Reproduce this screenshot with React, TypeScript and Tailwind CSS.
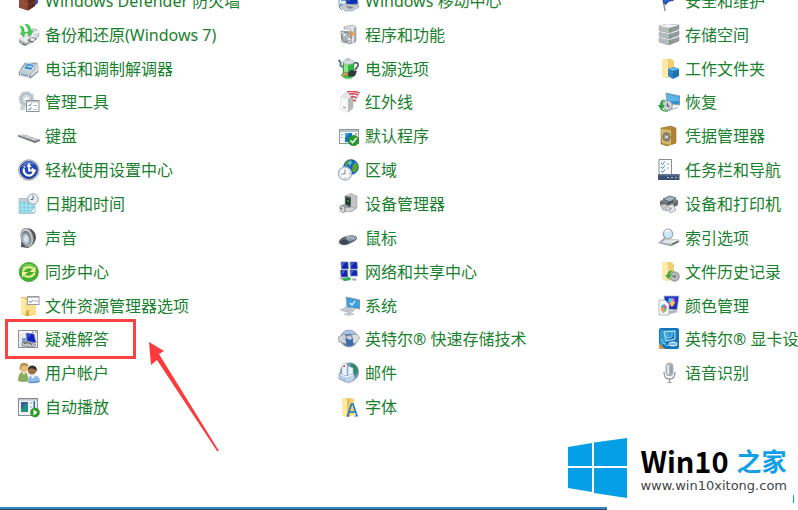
import type { ReactNode } from "react";

const icons: Record<string, ReactNode> = {
  firewall: (
    <>
      <path d="M11 2l9 3v8l-5 4z" fill="#3554b8" />
      <path d="M1 8l8-4 9 3-1 9-7 4.500-9-3z" fill="#7c3b2a" />
      <path d="M1 8l9 3v9.500l-9-3z" fill="#8f4a37" />
      <path d="M10 11l7-3v8l-7 4.500z" fill="#5e2a20" />
      <path d="M1 12l9 3M5 9.500v4M6 14v4M10 15l7-3" stroke="#a0604a" strokeWidth=".5" fill="none" />
    </>
  ),
  backup: (
    <>
      <path d="M1 16l9-4 6 3v2l-8 5-7-3z" fill="#a8adb2" />
      <path d="M1 15.500l9-4.500 6 3-8 5z" fill="#eceff1" stroke="#a6aaae" strokeWidth=".5" />
      <path d="M4 20l4 1" stroke="#555" strokeWidth="1" />
      <ellipse cx="15.500" cy="10" rx="5.500" ry="5" fill="#d7dadd" stroke="#8b9095" strokeWidth=".7" />
      <path d="M15 9.500l5-3 .8 2.500zM15 9.500l-2 4.500 4 .5z" fill="#fafafa" />
      <path d="M9 16l6-3 4 2-5 4z" fill="#74797e" />
      <ellipse cx="14.500" cy="15.500" rx="2.500" ry="1.500" fill="#e9e9e9" />
      <path d="M2 2q5 0 4 6h2l-2.500 5L2 9h2Q4 5 2 2zM7 0q6 0 5.500 7H15l-3 5-4-4h2.500Q10 3 7 0z" fill="#43d04a" stroke="#1c9f2b" strokeWidth=".4" />
    </>
  ),
  phone: (
    <>
      <path d="M1 14L7 5l12 0 1 9-7 6-12-3z" fill="#8b9aa5" stroke="#6f7d87" strokeWidth=".5" />
      <path d="M1 14l11 3 7-8-11-3z" fill="#c3cdd4" />
      <path d="M8.500 5l8 1.500-3 6-8-1.500z" fill="#4293d0" stroke="#eef5f9" strokeWidth=".8" />
      <path d="M9 8l5 1" stroke="#d7f0ff" strokeWidth="1" />
      <path d="M17 5l3 2v6l-7 6-1-2 5-6z" fill="#d8dfe4" stroke="#8c979e" strokeWidth=".5" />
      <path d="M2 14.500l9 2.500v3l-9-3z" fill="#dfe6ea" />
      <path d="M3 16l7 2" stroke="#4c7ba1" strokeWidth="1" />
    </>
  ),
  admin: (
    <>
      <circle cx="8.500" cy="8" r="5.500" fill="none" stroke="#b5c1c8" strokeWidth="3.500" />
      <circle cx="8.500" cy="8" r="7" fill="none" stroke="#c0cbd1" strokeWidth="2" strokeDasharray="2.800 2.700" />
      <circle cx="8.500" cy="8" r="3" fill="#f1f6f8" stroke="#91a2ac" strokeWidth=".5" />
      <path d="M3 13l-1 6h5v-5z" fill="#c7d3da" />
      <rect x="8.500" y="9.500" width="12.500" height="11" fill="#fff" stroke="#8b9195" />
      <path d="M9 10h12v1.500H9z" fill="#bcc4c9" />
      <path d="M10.500 14l1 1 2-2.500M10.500 18l1 1 2-2.500" stroke="#267dce" fill="none" />
      <path d="M15.500 14.500H19M15.500 18.500H19" stroke="#b4bbbf" />
    </>
  ),
  keyboard: (
    <>
      <path d="M0 10l6-.5 16 5-5 2z" fill="#babdc0" />
      <path d="M0 10v1.500l17 6.500 5-2v-1.500l-5 1.500z" fill="#6d7276" />
      <path d="M3 10.500l14 4.500M6 10.300l12 3.700" stroke="#dddfe1" strokeWidth=".7" />
      <path d="M5 12l5-2M10 14l5-2" stroke="#9ba0a4" strokeWidth=".5" />
    </>
  ),
  ease: (
    <>
      <circle cx="10.800" cy="11" r="10.300" fill="#bfc5d1" stroke="#8990a5" strokeWidth=".7" />
      <circle cx="10.800" cy="11" r="8.500" fill="#2146b8" stroke="#142f8b" />
      <path d="M4 8a7 7 0 0113-2q-6-2-13 2z" fill="#5274d4" />
      <path d="M6 9.500a5 5 0 0010 3.500" fill="none" stroke="#fff" strokeWidth="2.200" />
      <path d="M11 5v6.500h6" fill="none" stroke="#fff" strokeWidth="1.800" />
      <path d="M13.500 8.500l5 3-4 3.500zM8.500 8L11 3.500 13.500 8z" fill="#fff" />
      <circle cx="6.500" cy="8" r="1" fill="#cbd7fa" />
    </>
  ),
  date: (
    <>
      <path d="M1 5.500h16v14l-2 1H1z" fill="#d7edf3" stroke="#8cb1bd" strokeWidth=".7" />
      <path d="M1.500 9h15v10.500h-15z" fill="#7fd0e2" />
      <path d="M1 6h16v3H1z" fill="#bdcbd2" />
      <path d="M4.500 9v10M8.500 9v10M12.500 9v10M2 12.500h14M2 16h14" stroke="#c4eef6" strokeWidth=".7" />
      <path d="M12 20l5-1v-5z" fill="#eefaff" stroke="#91a6ad" strokeWidth=".4" />
      <circle cx="15" cy="6" r="5.300" fill="#e9edf0" stroke="#9aa6ae" />
      <path d="M15 2.500V6.500H12.500" stroke="#536f88" strokeWidth="1" fill="none" />
    </>
  ),
  sound: (
    <>
      <path d="M4 3q3-3 9-1 5 3 5 9-1 7-8 10l-7-1z" fill="#51565a" />
      <ellipse cx="9" cy="10.500" rx="6" ry="9.500" transform="rotate(-14 9 10.500)" fill="#c3c9cd" stroke="#8b9297" strokeWidth=".7" />
      <ellipse cx="8.500" cy="11" rx="4.600" ry="7.500" transform="rotate(-14 8.500 11)" fill="#7c858c" />
      <ellipse cx="8" cy="12" rx="3.500" ry="5.500" transform="rotate(-14 8 12)" fill="#b6c6d1" />
      <ellipse cx="8" cy="12" rx="1.800" ry="3" fill="#dbe5ec" />
    </>
  ),
  sync: (
    <>
      <circle cx="10.800" cy="11" r="9.600" fill="#43b12d" stroke="#2d9129" strokeWidth=".7" />
      <path d="M3 8a8 8 0 0115 0q-7-3-15 0z" fill="#77cb50" />
      <path d="M5 10.500a6 5 0 0110-3" stroke="#f5ee9d" strokeWidth="2" fill="none" />
      <path d="M17.500 5.500v5.500h-6zM4 16.500v-5.500h6z" fill="#f5ee9d" />
      <path d="M16.500 11.500a6 5 0 01-10 3" stroke="#f5ee9d" strokeWidth="2" fill="none" />
    </>
  ),
  explorer: (
    <>
      <path d="M3 2h5l2 2h8v16l-9 1-6-2z" fill="#e9c45d" />
      <path d="M3 3h4l1 16H3z" fill="#ffeaa2" />
      <path d="M7 5h11v15H8z" fill="#fae08d" />
      <path d="M8 21v-5l3-1v6z" fill="#d6aa44" />
      <rect x="9.500" y="1.500" width="11.500" height="8" fill="#fff" stroke="#969ca0" />
      <path d="M10 2h11v1H10z" fill="#bac2c7" />
      <path d="M11 6l1.500 1.500L15 5" stroke="#398ccd" fill="none" />
      <path d="M16 6h4" stroke="#aaa" />
    </>
  ),
  trouble: (
    <>
      <rect x=".5" y="2.500" width="19" height="17" fill="#e8eaec" stroke="#8d9499" />
      <path d="M1 3h18v2H1z" fill="#f8f9f9" />
      <path d="M14 3h1.500v2H14zM17 3h1.500v2H17z" fill="#aaa" />
      <path d="M4 10h4v7H4z" fill="#7ba1c2" />
      <path d="M8 5l8 1 2 9-9-2z" fill="#0b20c3" stroke="#8b92a6" strokeWidth=".7" />
      <path d="M9 6l4 .5-3 4z" fill="#3550d8" />
      <path d="M4 15l6-2 8 4-3 2-11-1z" fill="#c0c4c8" stroke="#626970" strokeWidth=".6" />
      <path d="M6 15.500l4-1 4 2" stroke="#333" strokeWidth=".8" fill="none" />
    </>
  ),
  users: (
    <>
      <path d="M0 19q0-8 4-9l5 1 2 8q-5 2-11 0z" fill="#8bac5d" />
      <circle cx="6" cy="6" r="4.300" fill="#e7bd7c" />
      <path d="M1.500 6Q2-.5 8 1q3 1 2.500 4Q8 3 4 4q-1 2-1.500 5z" fill="#b89550" />
      <path d="M4 10l2 3 2-3" fill="#f7e3b7" />
      <path d="M10 21q0-8 4-8l5 1q3 1 3 6-5 2-12 1z" fill="#8fbbe8" />
      <circle cx="14" cy="8.500" r="4" fill="#a56d46" />
      <path d="M10 8q0-4.500 4.500-4.500t4.500 6q-3-4-7-3z" fill="#34302e" />
      <path d="M12.500 13l2 4 3-3.500" fill="#edf6ff" />
      <path d="M11 20q5 1 10-.5" stroke="#5486bd" fill="none" />
    </>
  ),
  autoplay: (
    <>
      <rect x=".5" y="2.500" width="19" height="17" fill="#f1f2f4" stroke="#878d93" />
      <path d="M1 3h18v1.500H1z" fill="#bdc4ca" />
      <path d="M3 6h7v10H3z" fill="#239083" />
      <path d="M3 6h7L3 13z" fill="#375fa1" />
      <path d="M12 6h2v2h-2zM12 10h2v2h-2z" fill="#bfd0da" />
      <path d="M15.500 5H17v7h-1.500z" fill="#2675a8" />
      <circle cx="17" cy="16.500" r="4.500" fill="#2c9d25" stroke="#157d1c" strokeWidth=".5" />
      <path d="M15.500 13.500l4 3-4 3z" fill="#fff" />
    </>
  ),
  mobility: (
    <>
      <path d="M1 2h9v13H1z" fill="#e9f3fa" stroke="#779fc2" />
      <path d="M3 9h5v2H3z" fill="#4b9dd8" />
      <path d="M8 3l11-1 1 12-12 1z" fill="#0b30b5" stroke="#7a8ea9" />
      <path d="M9 4l9-1-8 9z" fill="#3b6bdc" />
      <path d="M2 16l6-2 12 1 1 2-7 4H7z" fill="#c3cbd3" stroke="#87929b" strokeWidth=".6" />
      <path d="M7 16l9 1-4 2z" fill="#76818a" />
      <path d="M4 13l-3 4 3 3" fill="none" stroke="#5688b3" />
    </>
  ),
  programs: (
    <>
      <path d="M6 3l9-2 3 2v14l-2 2-4-1V5H6z" fill="#dfe2e4" stroke="#898e92" strokeWidth=".6" />
      <path d="M16 4l2-1v14l-2 2z" fill="#a2a9ad" />
      <path d="M3 7l10 1v12l-9-2z" fill="#d9dfe2" stroke="#787f83" strokeWidth=".8" />
      <circle cx="8.500" cy="13" r="4.700" fill="#acb5bb" stroke="#62696f" strokeWidth=".8" />
      <path d="M8.500 13l-4-2 2-2zM9 13l4 2-2 2z" fill="#f2f6f9" />
      <circle cx="8.500" cy="13" r="1.200" fill="#fff" stroke="#555" strokeWidth=".5" />
      <path d="M13 6l1 2 2-1-1 2 2 1-2 1-1 2-1-2-2-1 2-1z" fill="#ef9831" />
    </>
  ),
  power: (
    <>
      <path d="M5 9L2.500 8V4L.5 2" stroke="#5d6d7c" strokeWidth="1.800" fill="none" />
      <path d="M16 5q5-1 4 3l-3 4" stroke="#4f4a68" strokeWidth="1.600" fill="none" />
      <path d="M5 5q0-3 5-3t6 3v13q-2 3-6 3t-5-3z" fill="#32b746" stroke="#257f34" strokeWidth=".5" />
      <path d="M6 6l4 0v12l-4-1z" fill="#8ce58b" />
      <ellipse cx="10.500" cy="4" rx="5.500" ry="2.500" fill="#d8dedf" stroke="#a3acae" strokeWidth=".6" />
      <path d="M8 0h4v3H8z" fill="#bfc6c9" />
      <path d="M8 16l5-4 6 1-2 5-5 1z" fill="#363b3d" />
      <path d="M3 17l5-3 3 2-6 3z" fill="#c3a955" stroke="#665628" strokeWidth=".5" />
      <path d="M6 20q5 2 9-1" stroke="#9fe49c" fill="none" />
    </>
  ),
  infrared: (
    <>
      <path d="M3 6l4-4 8 2v13l-5 4-7-3z" fill="#cbced0" stroke="#a0a5a8" strokeWidth=".5" />
      <path d="M3 6l7 2v13l-7-3z" fill="#f7f7f7" />
      <path d="M10 8l5-4v13l-5 4z" fill="#b5babd" />
      <path d="M3 6l4-4 8 2-5 4z" fill="#e5e8e9" />
      <path d="M5 16l3 1" stroke="#777" strokeWidth=".8" />
      <path d="M9 .8q6-1 12.500 1M11 3q5-1 9 1M13 6q3-1 6 1M15 9l3 1" stroke="#cf4650" strokeWidth="1.500" fill="none" />
      <path d="M16 11l5.500-9" stroke="#e5858b" strokeWidth=".8" />
    </>
  ),
  defaults: (
    <>
      <rect x="1.500" y="4.500" width="19" height="14" fill="#f5f7f9" stroke="#8f989f" />
      <path d="M2 5h18v2H2z" fill="#b8c2c9" />
      <path d="M7 8h7v9H7z" fill="#1675c4" />
      <path d="M7 8h4l-4 5z" fill="#4b9fe8" />
      <path d="M3 9h2v1H3zM3 12h2v1H3zM17 8h2v2h-2z" fill="#a7afb5" />
      <circle cx="15.500" cy="15.500" r="5.300" fill="#249b2b" stroke="#137d20" strokeWidth=".5" />
      <path d="M12.500 15.500l2.200 2.200L18.500 13" fill="none" stroke="#fff" strokeWidth="1.500" />
    </>
  ),
  region: (
    <>
      <circle cx="13" cy="8" r="7.500" fill="#1b67c4" stroke="#174c8b" strokeWidth=".5" />
      <path d="M7 5q3-4 7-4l-2 4-3 1-1 2zM15 6l3-3 2 4-1 4-3 3-2-3z" fill="#58a62c" />
      <path d="M10 3q2-1 4 0l-2 4z" fill="#62c5ee" />
      <circle cx="7" cy="14.500" r="6.700" fill="#dfe5eb" stroke="#9ba8b3" />
      <circle cx="7" cy="14.500" r="5" fill="#f8fafb" />
      <path d="M7 10.500v4.500H3.500M11 14.500h1M7 18.500v1" fill="none" stroke="#697d93" strokeWidth=".9" />
    </>
  ),
  devices: (
    <>
      <path d="M7 3l6-2.500L19 3v12l-6 4-6-3z" fill="#c3c4c6" stroke="#909395" strokeWidth=".5" />
      <path d="M7 3l6 1v12l-6-2z" fill="#595d60" />
      <path d="M8 5l4 1v6l-4-1z" fill="#143d24" />
      <path d="M9 7l2 2" stroke="#51d14c" />
      <path d="M1 13l5-2 4 2v5l-5 2-4-2z" fill="#9b9ea0" />
      <path d="M1 13l5 1v5l-5-1z" fill="#d5d6d8" />
      <path d="M2 14l2 1v2l-2-1z" fill="#767a7d" />
      <path d="M7 15l6-1 5 1-6 4-5-1z" fill="#d2d3d5" stroke="#999" strokeWidth=".5" />
    </>
  ),
  mouse: (
    <>
      <path d="M1 14q2-4 8-5 7-2 10 1 1 3-6 6-7 4-11 1-2-1-1-3z" fill="#5b6773" />
      <path d="M8 9.500q5-2 11 .5-1 3-7 4-5-1-4-4.500z" fill="#93a1ae" />
      <path d="M2 14.500q4-3 7-1l2 3q-7 2-9-2z" fill="#3c4650" />
      <path d="M9 10q5 0 7 2" stroke="#b7c3cc" strokeWidth=".8" fill="none" />
    </>
  ),
  network: (
    <>
      <path d="M3 1l7 0 .5 7-7 0zM12 1l7 0 .5 7-7 0zM2.500 9l7 0 .5 7-7 0zM12 9l7 0 .5 6-7 0z" fill="#1023b0" stroke="#8992aa" strokeWidth=".8" />
      <path d="M4 2h3l-3 4zM13 2h3l-3 4zM4 10h3l-3 4zM13 10h3l-3 4z" fill="#3961d6" />
      <path d="M0 17l7-1 6 1v2l-6 1zM13 18l4-1 2 2-3 1z" fill="#a9b2b9" />
      <path d="M4 18l8-2v3l-6 1z" fill="#25b14a" />
    </>
  ),
  system: (
    <>
      <path d="M8 2l14 3v9L9 12z" fill="#4485ae" stroke="#98a8b3" />
      <path d="M9 3l12 3v7L9 11z" fill="#39a0e2" />
      <path d="M12 8l2 2 3-4" stroke="#fff" fill="none" strokeWidth="1.200" />
      <path d="M2 15l6-3 9 3-5 3zM6 19l6-1 4 1-5 1.500z" fill="#cad3d9" stroke="#9aa4aa" strokeWidth=".5" />
      <path d="M5 15l7 2M7 13.500l7 2" stroke="#9aa8b1" strokeWidth=".5" />
    </>
  ),
  storage: (
    <>
      <circle cx="11" cy="10.500" r="8.300" fill="#3f71b0" stroke="#909aa4" strokeWidth="1.200" />
      <path d="M3 8q3-6 8-6t8 6q-8-4-16 0z" fill="#a9c1de" />
      <path d="M0 9l6-3 4 4-2 6-7-2z" fill="#ccd2d6" stroke="#7e878f" strokeWidth=".6" />
      <path d="M13 7l6-1 3 4-5 6-4-3z" fill="#d7dcdf" stroke="#858e96" strokeWidth=".6" />
      <ellipse cx="11" cy="11" rx="3.500" ry="4" fill="#c2d0dd" stroke="#617386" strokeWidth=".7" />
      <path d="M8 10l4 2v5l-4-2zM12 12l3-2v4l-3 3z" fill="#3c6da8" />
    </>
  ),
  mail: (
    <>
      <circle cx="11.500" cy="10" r="9.200" fill="#6e9dbe" stroke="#557899" strokeWidth=".5" />
      <path d="M13 1q7 2 7 9l-3 4-2-6-3-2z" fill="#2f8b67" />
      <path d="M4 3l5-2v15l-5-1zM10 4l5 2v11l-5-1z" fill="#eef4fa" stroke="#9db2c4" strokeWidth=".5" />
      <path d="M1 11l6 3 9-2 1 5-6 4-10-4z" fill="#bcd3ea" stroke="#7291ad" strokeWidth=".6" />
      <path d="M1 11l6 10M7 14l0 5" stroke="#88a3c4" strokeWidth=".5" />
      <path d="M2 12l5 3 8-2" stroke="#fff" fill="none" />
      <path d="M5 4l2-1v2H5z" fill="#d9433e" />
    </>
  ),
  fonts: (
    <>
      <path d="M4 2h9l3 1v16l-8 2-4-2z" fill="#f2d27b" />
      <path d="M4 2h4l1 2v17l-5-2z" fill="#ffe9a8" />
      <path d="M9 3h3v17l-3 1z" fill="#e9c25c" />
      <path d="M9.500 20l4-12h1.500l4 12M11 16h6.500" fill="none" stroke="#177abe" strokeWidth="1.600" />
      <path d="M8.500 20h3M16.500 20h3.500" stroke="#177abe" />
    </>
  ),
  security: (
    <>
      <path d="M4 2l3 19" stroke="#8b929a" strokeWidth="1.500" />
      <path d="M4 2q5-2 8 1t7 0q0 5-4 8-5 0-7 4l-3-2z" fill="#2449b0" />
      <path d="M5 3q5-1 7 2l-1 6q-4 0-5 3z" fill="#3264cc" />
      <path d="M12 6q3 1 5 0" stroke="#7da2ec" fill="none" />
    </>
  ),
  spaces: (
    <>
      {[14, 8, 2].map((y) => (
        <g key={y}>
          <path d={`M1 ${y}l8-2 12 1v4l-10 4L1 ${y + 4}z`} fill="#92999d" stroke="#7e8488" strokeWidth=".5" />
          <path d={`M1 ${y}l10 2v5L1 ${y + 4}z`} fill="#b5babd" />
          <path d={`M1 ${y}l8-2 12 1-10 3z`} fill="#f0f2f3" />
          <path d={`M12 ${y + 3}v3`} stroke="#6a9f45" strokeWidth="1.200" />
        </g>
      ))}
    </>
  ),
  workfolders: (
    <>
      <path d="M4 1h9l3 2v14l-8 3-4-2z" fill="#f2ce71" />
      <path d="M4 1h5l1 3v16l-6-2z" fill="#ffe9aa" />
      <path d="M10 11l6-2 5 2v7l-6 3-5-3z" fill="#1c75b1" />
      <path d="M10 11l6-2 5 2-6 2z" fill="#63bae7" />
      <path d="M10 12l5 2v6l-5-2z" fill="#318fc7" />
      <path d="M10 15l5 2 6-2" stroke="#0f5e97" strokeWidth=".5" fill="none" />
    </>
  ),
  recovery: (
    <>
      <path d="M8 2l14 3v9L9 13z" fill="#348fcb" stroke="#98a8b2" />
      <path d="M9 3l12 3v4L9 10z" fill="#59b4ea" />
      <path d="M8 19l11-3 1 1-9 3z" fill="#b1bdc6" />
      <circle cx="9.500" cy="14.500" r="5" fill="#b5bcc0" stroke="#8a949a" strokeWidth=".7" />
      <circle cx="9.500" cy="14.500" r="3" fill="none" stroke="#edf0f2" />
      <path d="M9.500 12v3l2 1" stroke="#475764" fill="none" />
      <path d="M8 9q-4 1-3.500 5H7l-4 5-3-5h2Q2 8 8 9z" fill="#24a33a" />
      <path d="M3 18q3 3 7 2" stroke="#24a33a" strokeWidth="1.200" fill="none" />
    </>
  ),
  credentials: (
    <>
      <path d="M3 3l10-2 5 2v15l-9 3-6-2z" fill="#b28737" stroke="#957a3b" strokeWidth=".6" />
      <path d="M3 4l10 1v15l-9-2z" fill="#d6b96a" />
      <path d="M13 5l5-2v15l-5 2z" fill="#ad8131" />
      <path d="M5 6l7 1v11l-7-2z" fill="#aa9d65" stroke="#e8d295" strokeWidth=".5" />
      <circle cx="8.500" cy="12" r="3.700" fill="#b5b6a3" stroke="#5a5742" strokeWidth=".8" />
      <path d="M5 12h7M8.500 8v8M6 9l5 6M11 9l-5 6" stroke="#555546" strokeWidth=".6" />
      <circle cx="8.500" cy="12" r="1.200" fill="#efeee0" />
    </>
  ),
  taskbar: (
    <>
      <path d="M1 .5h12.500V16H1z" fill="#fafbfc" stroke="#858e99" />
      <path d="M3 4l1.500 1.500L7 2.500M3 8l1.500 1.500L7 6.500M3 12l1.500 1.500L7 10.500" stroke="#347fc0" fill="none" />
      <path d="M9 5h2M9 9h2" stroke="#929ba5" />
      <path d="M0 15h21.500v6H0z" fill="#3d5275" />
      <path d="M0 15h21.500v1.500H0z" fill="#647695" />
      <path d="M9 18h2v1H9zM13 18h2v1h-2zM17 18h2v1h-2z" fill="#aebdd4" />
    </>
  ),
  printers: (
    <>
      <path d="M2 8l9-4 9 3v4l-7 4-11-3z" fill="#7b8083" />
      <path d="M5 6l7-3 6 2-6 4z" fill="#a3b7c5" stroke="#535c62" strokeWidth=".8" />
      <path d="M2 8l10 3 8-3v4l-7 4-11-4z" fill="#666b6f" />
      <path d="M2 12l5-1 4 2v5l-6-1z" fill="#c3c8cc" stroke="#858c91" strokeWidth=".6" />
      <path d="M9 13l6-2 3 6-5 3-5-4z" fill="#e0e2e4" stroke="#868b8f" strokeWidth=".6" />
      <path d="M10 14l4 1-2 3z" fill="#9ca3a9" />
      <path d="M9 11l6-3" stroke="#2c3236" />
    </>
  ),
  indexing: (
    <>
      <path d="M1 15l6-3 14 1v2l-8 4-12-3z" fill="#a0a8ad" stroke="#8f969b" strokeWidth=".5" />
      <path d="M1 15l6-3 14 1-8 4z" fill="#e1e5e7" />
      <path d="M14 17.500l6-3" stroke="#4c5155" strokeWidth="1.200" />
      <path d="M13 18l2-1" stroke="#57a346" />
      <circle cx="10" cy="7" r="4.700" fill="#cfe6f6" stroke="#97a8b6" strokeWidth="1.400" />
      <path d="M7 5q2-3 5-1" stroke="#fff" strokeWidth="1.500" fill="none" />
      <path d="M7 11l-4 4" stroke="#a3adb5" strokeWidth="2" />
    </>
  ),
  history: (
    <>
      <path d="M4 1h9l3 2v15l-7 2-5-2z" fill="#efcf78" />
      <path d="M4 1h5l1 4v15l-6-2z" fill="#ffebad" />
      <circle cx="16.500" cy="15.500" r="4.800" fill="#a3adaa" stroke="#7f8a87" strokeWidth=".7" />
      <circle cx="16.500" cy="15.500" r="2.800" fill="none" stroke="#d3dbd7" strokeWidth=".8" />
      <path d="M14 15h4l-2 2" stroke="#53615e" strokeWidth=".8" fill="none" />
      <path d="M16 10q-4 0-4 4h2l-4 4-3-4h2q1-6 7-4z" fill="#45aa42" />
    </>
  ),
  color: (
    <>
      <path d="M6 1h15l-2 14-12-1z" fill="#1c2f9c" stroke="#bac4cf" strokeWidth=".8" />
      <path d="M8 2h12l-1 10-10-1z" fill="#2036d5" />
      <path d="M11 3h5l1 4-3 5-3-3z" fill="#f04fbf" />
      <path d="M11 3l4 1-2 4-3-1z" fill="#32dbdd" />
      <path d="M14 5l3 3-3 4-2-3z" fill="#ffca48" />
      <path d="M9 16l8-1 3 2-8 2z" fill="#adb5be" />
      <path d="M1 5h6l4 4v11H1z" fill="#f5f6f7" stroke="#a4abb1" strokeWidth=".8" />
      <path d="M3 11l3-2 3 3-1 4-3 2-2-3z" fill="#34c0ac" />
      <path d="M6 9l3 3-3 3z" fill="#e55aab" />
      <path d="M3 12l4 2-1 4-3-3z" fill="#fc9e37" />
    </>
  ),
  graphics: (
    <>
      <rect x="1" y="0" width="20" height="21" rx="2" fill="#1475bb" />
      <path d="M2 2h17l-9 10-8 7z" fill="#2f9bd4" />
      <path d="M6 4l11-1v8l-9 2z" fill="none" stroke="#caebfb" />
      <path d="M5 15q3 4 8 2M3 11q1 4 5 5M9 6v4l5-1V5" fill="none" stroke="#81c7ed" />
      <ellipse cx="15" cy="16" rx="4.500" ry="2.500" fill="#c2e5f5" />
      <path d="M11.500 16h6.500" stroke="#1475bb" strokeWidth=".8" />
      <path d="M1 15l6 6H2l-1-1z" fill="#d39643" />
    </>
  ),
  speech: (
    <>
      <rect x="8" y="1" width="7" height="13" rx="3.500" fill="#b4bac1" stroke="#989fa7" strokeWidth=".8" />
      <path d="M10 3v9" stroke="#f1f4f7" strokeWidth="1.500" />
      <path d="M13 3v9" stroke="#8b95a1" strokeWidth="1.200" />
      <path d="M6 10q0 7 5.500 7T17 10M11.500 17v3" stroke="#8f98a2" strokeWidth="1.300" fill="none" />
      <path d="M9.500 20.500h4" stroke="#9ca4ad" />
    </>
  ),
};

const items: [string, string][] = [
  ["firewall", "Windows Defender 防火墙"],
  ["backup", "备份和还原(Windows 7)"],
  ["phone", "电话和调制解调器"],
  ["admin", "管理工具"],
  ["keyboard", "键盘"],
  ["ease", "轻松使用设置中心"],
  ["date", "日期和时间"],
  ["sound", "声音"],
  ["sync", "同步中心"],
  ["explorer", "文件资源管理器选项"],
  ["trouble", "疑难解答"],
  ["users", "用户帐户"],
  ["autoplay", "自动播放"],
  ["mobility", "Windows 移动中心"],
  ["programs", "程序和功能"],
  ["power", "电源选项"],
  ["infrared", "红外线"],
  ["defaults", "默认程序"],
  ["region", "区域"],
  ["devices", "设备管理器"],
  ["mouse", "鼠标"],
  ["network", "网络和共享中心"],
  ["system", "系统"],
  ["storage", "英特尔® 快速存储技术"],
  ["mail", "邮件"],
  ["fonts", "字体"],
  ["security", "安全和维护"],
  ["spaces", "存储空间"],
  ["workfolders", "工作文件夹"],
  ["recovery", "恢复"],
  ["credentials", "凭据管理器"],
  ["taskbar", "任务栏和导航"],
  ["printers", "设备和打印机"],
  ["indexing", "索引选项"],
  ["history", "文件历史记录"],
  ["color", "颜色管理"],
  ["graphics", "英特尔® 显卡设置"],
  ["speech", "语音识别"],
];

function PanelItem({ icon, label }: { icon: string; label: string }) {
  return (
    <li className="flex items-center">
      <a href={`#${icon}`} className="flex items-center gap-[5px] whitespace-nowrap">
        <svg viewBox="0 0 22 22" className="size-[22px] shrink-0" aria-hidden="true">
          {icons[icon]}
        </svg>
        <span>{label}</span>
      </a>
    </li>
  );
}

function Watermark() {
  return (
    <div className="flex items-center justify-end gap-3 pr-[11px]">
      <svg viewBox="0 0 60 60" className="size-[60px]" aria-hidden="true">
        <path d="M0 9l24-4v23H0zM26 4.500L59 0v28H26zM0 30h24v24L0 50zM26 30h33v30l-33-5z" fill="#059fe8" />
      </svg>
      <div className="flex flex-col">
        <div className="flex items-center gap-2 font-['Noto_Sans_CJK_SC',sans-serif] leading-9 font-bold">
          <span className="text-[29px] text-black">Win10</span>
          <span className="text-[25px] text-[#119fe7]">之家</span>
        </div>
        <span className="font-['DejaVu_Sans',sans-serif] text-[13px] leading-4 text-[#444]">www.win10xitong.com</span>
      </div>
    </div>
  );
}

export default function App() {
  return (
    <main className="relative flex min-h-screen flex-col overflow-hidden bg-white">
      <ul className="-mt-4 grid h-[440px] auto-cols-[320px] grid-flow-col grid-rows-13 pl-[18px] font-['Noto_Sans','Noto_Sans_CJK_SC',sans-serif] text-[16px] leading-6 text-[#19802c]">
        {items.map(([icon, label]) => (
          <PanelItem key={icon} icon={icon} label={label} />
        ))}
      </ul>
      <div className="absolute top-[319px] left-[5px] h-10 w-[131px] border-[3px] border-[#fa4343]" />
      <svg viewBox="0 0 72 112" className="absolute top-[342px] left-[148px] h-[112px] w-[72px]" aria-hidden="true">
        <path d="M1 0l15 9-5 3 60 97-2 0L9 18l-6 5z" fill="#fb3b3b" />
      </svg>
      <footer className="mt-auto">
        <Watermark />
        <div className="mt-[9px] mr-[191px] h-[3px] border-t-2 border-[#2f87c5] bg-[#34495c]" />
      </footer>
      <div className="absolute right-[4px] bottom-[7px] h-[8px] w-px bg-[#119fe7]" />
    </main>
  );
}
